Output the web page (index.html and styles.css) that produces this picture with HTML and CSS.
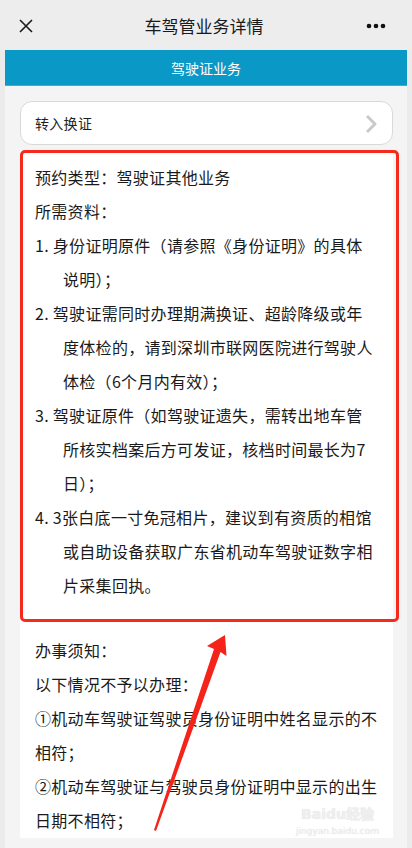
FILE: index.html
```html
<!DOCTYPE html>
<html lang="zh-CN">
<head>
<meta charset="utf-8">
<meta name="viewport" content="width=device-width, initial-scale=1">
<title>车驾管业务详情</title>
<link rel="stylesheet" href="styles.css">
</head>
<body>
<header class="topbar">
  <svg class="icon-close" width="16" height="16" viewBox="0 0 16 16"><path d="M2 2L14 14M14 2L2 14" stroke="#1a1a1a" stroke-width="1.6" fill="none"/></svg>
  <h1 class="title">车驾管业务详情</h1>
  <svg class="icon-more" width="20" height="6" viewBox="0 0 20 6"><circle cx="3" cy="3" r="2.3" fill="#111"/><circle cx="10" cy="3" r="2.3" fill="#111"/><circle cx="17" cy="3" r="2.3" fill="#111"/></svg>
</header>
<main class="page">
  <div class="tabbar">驾驶证业务</div>
  <div class="content">
    <a class="link-card">
      <span>转入换证</span>
      <svg class="chevron" width="14" height="20" viewBox="0 0 14 20"><path d="M3 2L11 10L3 18" stroke="#c9c9c9" stroke-width="3" fill="none" stroke-linejoin="round"/></svg>
    </a>
    <section class="detail">
      <div class="highlight">
        <p class="line">预约类型：驾驶证其他业务</p>
        <p class="line">所需资料：</p>
        <p class="item">1. 身份证明原件（请参照《身份证明》的具体说明）；</p>
        <p class="item">2. 驾驶证需同时办理期满换证、超龄降级或年度体检的，请到深圳市联网医院进行驾驶人体检（6个月内有效）；</p>
        <p class="item">3. 驾驶证原件（如驾驶证遗失，需转出地车管所核实档案后方可发证，核档时间最长为7日）；</p>
        <p class="item">4. 3张白底一寸免冠相片，建议到有资质的相馆或自助设备获取广东省机动车驾驶证数字相片采集回执。</p>
      </div>
      <div class="notes">
        <p class="line">办事须知：</p>
        <p class="line">以下情况不予以办理：</p>
        <p class="line">①机动车驾驶证驾驶员身份证明中姓名显示的不相符；</p>
        <p class="line">②机动车驾驶证与驾驶员身份证明中显示的出生日期不相符；</p>
      </div>
    </section>
  </div>
</main>
<div class="watermark"><span class="wm-logo">Baidu经验</span><span class="wm-url">jingyan.baidu.com</span></div>
<svg class="arrow" width="412" height="848" viewBox="0 0 412 848"><polygon points="225,635 226.5,656 220.5,652 156,831 154,830 214,649 207,646" fill="#f5231a"/></svg>
</body>
</html>
```

FILE: styles.css
```css
* { box-sizing: border-box; }
html, body { margin: 0; padding: 0; }
body {
  width: 412px;
  height: 848px;
  overflow: hidden;
  background: #ebebeb;
  font-family: "Noto Sans CJK SC", "Noto Sans", sans-serif;
  color: #1a1a1a;
  position: relative;
}
.topbar {
  height: 50px;
  background: #ededed;
  display: flex;
  align-items: center;
  justify-content: space-between;
  padding: 0 26px 0 18px;
}
.icon-close { margin-top: 2px; }
.icon-more { margin-top: 2px; }
.title {
  margin: 0;
  font-size: 17px;
  font-weight: normal;
  color: #1a1a1a;
  margin-left: 8px;
  line-height: 1;
}
.page {
  margin: 0 5px;
  background: #f4f4f5;
  height: 798px;
}
.tabbar {
  height: 36px;
  background: #0a98c7;
  color: #fff;
  font-size: 14px;
  display: flex;
  align-items: center;
  justify-content: center;
  border-bottom: 1px solid #3aaed3;
}
.content {
  padding: 15px 14px 0 15px;
}
.link-card {
  display: flex;
  align-items: center;
  justify-content: space-between;
  height: 44px;
  background: #fff;
  border: 1px solid #d9d9d9;
  border-radius: 12px;
  padding: 0 14px 0 14px;
  font-size: 14px;
  letter-spacing: 0.3px;
  color: #1e1e1e;
}
.chevron { margin-top: 1px; }
.detail {
  margin-top: 5px;
  background: #fff;
  padding-bottom: 1px;
}
.highlight {
  border: 3px solid #f52a1c;
  border-radius: 5px;
  margin-right: -6px;
  padding: 7px 20px 17px 12px;
}
.line, .item {
  margin: 0;
  font-size: 16px;
  line-height: 34px;
  letter-spacing: 0.3px;
}
.item {
  padding-left: 28px;
  text-indent: -28px;
}
.notes {
  padding: 11px 8px 0 15px;
}
.watermark {
  position: absolute;
  left: 296px;
  top: 804px;
  display: flex;
  flex-direction: column;
  align-items: center;
  gap: 1px;
  color: #efefef;
  text-shadow: 0 0 1px #dadada;
  font-family: "DejaVu Sans", sans-serif;
  pointer-events: none;
}
.wm-logo { font-size: 14px; font-weight: bold; line-height: 20px; }
.wm-url { font-size: 9px; line-height: 12px; }
.arrow {
  position: absolute;
  left: 0;
  top: 0;
  pointer-events: none;
}
```
